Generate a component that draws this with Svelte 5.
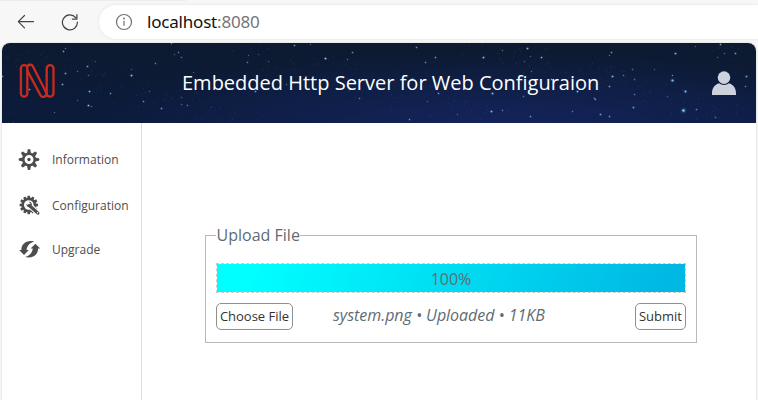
<script>
  // x, y, radius, opacity of each star in the header sky
  const stars = [
    [63, 11, 0.8, 0.7], [65, 8, 0.7, 0.5], [87, 26, 0.9, 0.7], [95, 21, 0.7, 0.35], [88, 35, 0.7, 0.5],
    [65, 33, 0.9, 0.75], [77, 31, 0.7, 0.5], [62, 44, 0.9, 0.8], [89, 51, 0.9, 0.9], [88, 65, 1, 0.85],
    [91, 66, 0.7, 0.5], [77, 60, 0.7, 0.4], [54, 72, 0.7, 0.45], [47, 56, 0.7, 0.5], [29, 49, 0.9, 0.7],
    [2, 36, 0.8, 0.6], [131, 35, 1, 0.9], [131, 29, 0.7, 0.35], [110, 53, 0.8, 0.6], [143, 61, 0.8, 0.6],
    [149, 51, 0.7, 0.4], [161, 68, 0.8, 0.7], [155, 23, 0.8, 0.5], [171, 3, 0.8, 0.5], [178, 12, 0.8, 0.5],
    [174, 14, 0.7, 0.4], [181, 17, 0.8, 0.4], [193, 32, 0.7, 0.35], [181, 57, 0.7, 0.4], [187, 65, 0.8, 0.45],
    [181, 64, 0.7, 0.4], [248, 15, 0.7, 0.4], [247, 22, 0.8, 0.5], [258, 14, 0.7, 0.3], [268, 21, 0.7, 0.4],
    [294, 5, 0.9, 0.6], [310, 4, 0.7, 0.4], [325, 18, 1, 0.95], [352, 12, 0.9, 0.6], [347, 19, 0.7, 0.5],
    [255, 51, 0.9, 0.65], [277, 48, 0.9, 0.7], [286, 44, 0.7, 0.5], [359, 58, 0.8, 0.5], [416, 7, 0.8, 0.6],
    [435, 17, 0.9, 0.65], [425, 22, 0.8, 0.6], [483, 17, 1, 0.85], [502, 10, 0.7, 0.5], [527, 8, 1, 0.85],
    [541, 17, 0.9, 0.8], [524, 21, 0.7, 0.4], [530, 16, 0.7, 0.4], [438, 53, 0.8, 0.7], [427, 61, 0.7, 0.4],
    [492, 53, 1, 0.9], [491, 71, 1, 0.85], [502, 70, 0.8, 0.5], [457, 74, 0.7, 0.4], [409, 79, 0.8, 0.6],
    [530, 76, 0.9, 0.6], [523, 56, 0.8, 0.4], [577, 51, 1, 0.85], [594, 58, 0.8, 0.6], [572, 71, 0.8, 0.45],
    [412, 38, 0.7, 0.5], [531, 31, 0.7, 0.5], [551, 39, 0.9, 0.7], [611, 12, 0.9, 0.6], [609, 15, 0.7, 0.5],
    [675, 13, 1, 0.8], [720, 4, 0.9, 0.7], [695, 6, 0.7, 0.4], [735, 13, 0.9, 0.7], [724, 13, 0.7, 0.45],
    [717, 17, 0.7, 0.4], [632, 29, 0.8, 0.4], [654, 29, 0.7, 0.4], [612, 36, 1, 0.85], [623, 35, 0.8, 0.45],
    [634, 39, 0.8, 0.45], [609, 46, 0.9, 0.7], [672, 40, 1.3, 0.85], [672, 35, 0.7, 0.7], [685, 51, 1.1, 0.85],
    [746, 36, 1, 0.7], [745, 46, 0.8, 0.5], [634, 54, 0.8, 0.45], [595, 59, 0.8, 0.5], [633, 67, 1, 0.65],
    [683, 70, 1.6, 0.85], [696, 69, 0.9, 0.55], [600, 74, 0.9, 0.7], [609, 76, 0.8, 0.7], [715, 77, 0.8, 0.45],
    [715, 54, 0.7, 0.4], [667, 56, 0.7, 0.35]
  ];

  // faint background grain of the sky
  const dust = Array.from({ length: 420 }, (_, i) => [
    (i * 137.508 + ((i * i) % 53)) % 754,
    (i * 43.77 + ((i * i * 7) % 31)) % 80,
    0.06 + ((i * 29) % 13) / 75
  ]);

  const gearTeeth = [0, 45, 90, 135, 180, 225, 270, 315];
  const cogTeeth = Array.from({ length: 12 }, (_, i) => i * 30);
  const arrows = [0, 180];
</script>

<div class="browser">
  <div class="toolbar">
    <svg class="nav-icon" width="18" height="18" viewBox="0 0 18 18"><path d="M16.5 8.7H1.5M7.5 2.5 1.3 8.7 7.5 14.9" /></svg>
    <svg class="nav-icon reload" width="18" height="18" viewBox="0 0 18 18"><path d="M16.4 9A7.5 7.5 0 1 1 14.7 4.6M15.9 1.5v4.6H11.4" /></svg>
    <div class="address">
      <svg width="18" height="18" viewBox="0 0 18 18" fill="none" stroke="#707070" stroke-width="1.2">
        <circle cx="9" cy="9" r="7.5" /><path d="M9 7.8v5" /><circle cx="9" cy="5.6" r=".4" />
      </svg>
      <span class="url">localhost<span class="port">:8080</span></span>
    </div>
  </div>

  <div class="page">
    <header>
      <svg class="sky" width="754" height="80" viewBox="0 0 754 80">
        {#each dust as [x, y, o]}
          <rect {x} {y} width="1.2" height="1.2" fill="#5179c8" opacity={o} />
        {/each}
        {#each stars as [x, y, r, o]}
          <circle cx={x - 1.5} cy={y - 2.5} r={r * 1.8} fill="#3c79bd" opacity={o * 0.3} />
          <circle cx={x - 1.5} cy={y - 2.5} r={r * 0.85} fill="#a9d8f4" opacity={o} />
        {/each}
      </svg>
      <svg class="logo" width="37" height="36" viewBox="0 0 37 36">
        <rect x="1.9" y="2.1" width="6.4" height="31.6" rx="3.2" />
        <path d="M8.3 7.5 21.3 31.9A3.1 3.1 0 0 0 27.2 29.5L14.2 3.9A3.2 3.2 0 0 0 8 4.5" />
        <rect x="27.7" y="2.1" width="6.8" height="31.6" rx="3.4" />
      </svg>
      <h1>Embedded Http Server for Web Configuraion</h1>
      <svg class="user" width="26" height="26" viewBox="0 0 26 26" fill="#ced2dc">
        <circle cx="13" cy="7.6" r="6.3" /><path d="M1 25v-1.6C1 17.8 4.1 14.3 8.2 13.3c2.8 2.1 6.8 2.1 9.6 0C21.9 14.3 25 17.8 25 23.4V25Z" />
      </svg>
    </header>

    <div class="body">
      <nav>
        <a class="item">
          <svg width="24" height="24" viewBox="-12 -12.5 24 24" fill="#4d4d4d">
            {#each gearTeeth as a}
              <path d="M-2.1-5.8-1.3-9.9Q0-11 1.3-9.9L2.1-5.8Z" transform="rotate({a})" />
            {/each}
            <circle r="5.7" fill="none" stroke="#4d4d4d" stroke-width="2.5" /><circle r="1.7" />
          </svg>
          <span>Information</span>
        </a>
        <a class="item">
          <svg width="24" height="24" viewBox="-12.3 -12.5 24 24" fill="#4d4d4d">
            {#each cogTeeth as a}
              <path d="M-1.5-6.3-1.2-9.2H1.2L1.5-6.3Z" transform="translate(-.5 -.5) rotate({a})" />
            {/each}
            <circle cx="-.5" cy="-.5" r="6.1" fill="none" stroke="#4d4d4d" stroke-width="2.6" />
            <path d="M3 2.6 9 8" stroke="#fff" stroke-width="5.4" stroke-linecap="round" />
            <path d="M0 0 8.6 7.6" stroke="#4d4d4d" stroke-width="3.2" stroke-linecap="round" />
            <path d="M-.6-3.7 1.1-2.2.7-.5-1-.1-2.8-1.8C-3.1.3-1.6 2 .4 1.8L2.5-.4C2.9-2.5 1.4-4-.6-3.7Z" />
            <circle cx="8.2" cy="7.3" r=".7" fill="#fff" />
          </svg>
          <span>Configuration</span>
        </a>
        <a class="item">
          <svg width="24" height="24" viewBox="-12.7 -12.3 24 24" fill="#4d4d4d">
            {#each arrows as a}
              <path d="M-10.5.8H-8.3C-8.6-4.9-3.2-9.8 4.6-7.7.4-6.6-2.6-3.8-3.1.8H-.9L-5.7 5.6Z" transform="rotate({a})" />
            {/each}
          </svg>
          <span>Upgrade</span>
        </a>
      </nav>

      <main>
        <fieldset>
          <legend>Upload File</legend>
          <div class="progress">100%</div>
          <div class="row">
            <button class="choose">Choose File</button>
            <em>system.png • Uploaded • 11KB</em>
            <button class="submit">Submit</button>
          </div>
        </fieldset>
      </main>
    </div>
  </div>
</div>

<style>
  :global(body) { margin: 0; background: #f7f7f7; }
  .browser { box-sizing: border-box; width: 758px; height: 400px; overflow: hidden; font-family: "Open Sans", "Noto Sans", sans-serif; display: flex; flex-direction: column; background: #f7f7f7; }
  .toolbar { box-sizing: border-box; height: 43px; flex: none; display: flex; align-items: center; padding-left: 17px; background: linear-gradient(90deg, #ececec 184px, #f7f7f7 188px) 0 0 / 100% 1px no-repeat #f7f7f7; }
  .nav-icon { fill: none; stroke: #454545; stroke-width: 1.2; stroke-linecap: round; stroke-linejoin: round; }
  .reload { margin-left: 26px; }
  .address { flex: 1; height: 34px; margin-left: 20px; box-sizing: border-box; display: flex; align-items: center; padding-left: 16px; background: #fff; border-radius: 17px 0 0 17px; box-shadow: 0 0 3px #0000001c; }
  .url { margin-left: 14px; font: 17px/24px "Noto Sans", sans-serif; letter-spacing: -0.2px; color: #111; white-space: nowrap; }
  .port { color: #757575; }
  .page { flex: 1; margin: 0 2px; background: #fff; border-radius: 8px 8px 0 0; overflow: hidden; display: flex; flex-direction: column; box-shadow: 0 0 2px #0003; }
  header { position: relative; height: 80px; flex: none; box-sizing: border-box; padding: 0 19px 0 17px; display: flex; align-items: center; background: radial-gradient(ellipse 420px 75px at 66% 105%, #14245c 0%, #14245c00 100%), linear-gradient(#0d1a30, #0b1b3b); }
  .sky { position: absolute; inset: 0; }
  .logo, h1, .user { position: relative; }
  .logo { margin-top: -5px; fill: none; stroke: #c92b1e; stroke-width: 2.3; stroke-linejoin: round; stroke-linecap: round; }
  h1 { margin: 0 0 0 126px; color: #fff; font-size: 20px; font-weight: 400; line-height: 28px; white-space: nowrap; }
  .user { margin-left: auto; }
  .body { flex: 1; display: flex; }
  nav { box-sizing: border-box; width: 140px; border-right: 1px solid #ddd; padding: 24px 0 0 15px; }
  .item { display: flex; align-items: center; gap: 11px; height: 24px; margin-bottom: 22px; font-size: 12px; color: #4d4d4d; }
  .item:nth-child(2) { margin-bottom: 20px; }
  main { flex: 1; padding: 101px 59px 0 63px; }
  fieldset { box-sizing: border-box; width: 492px; height: 119px; margin: 0; padding: 0 10px; border: 1px solid #b9b9b9; color: #5f6b73; font-size: 16px; }
  legend { padding: 0 0 0 .6px; line-height: 22px; }
  .progress { box-sizing: border-box; height: 30px; margin-top: 17px; border: 1px dashed #ccc; background: linear-gradient(110deg, #0ff 8%, #00b8e4 95%) padding-box; text-align: center; line-height: 30px; }
  .row { display: flex; align-items: center; margin-top: 10px; height: 27px; }
  button { box-sizing: border-box; height: 27px; padding: 0 0 2px; border: 1px solid #8f8f8f; border-radius: 5px; background: #fff; color: #333; font: 13px "Open Sans", sans-serif; white-space: nowrap; }
  .choose { width: 77px; }
  .submit { width: 51px; margin-left: auto; }
  em { margin: 0 0 3px 40px; white-space: nowrap; letter-spacing: -0.03px; }
</style>
